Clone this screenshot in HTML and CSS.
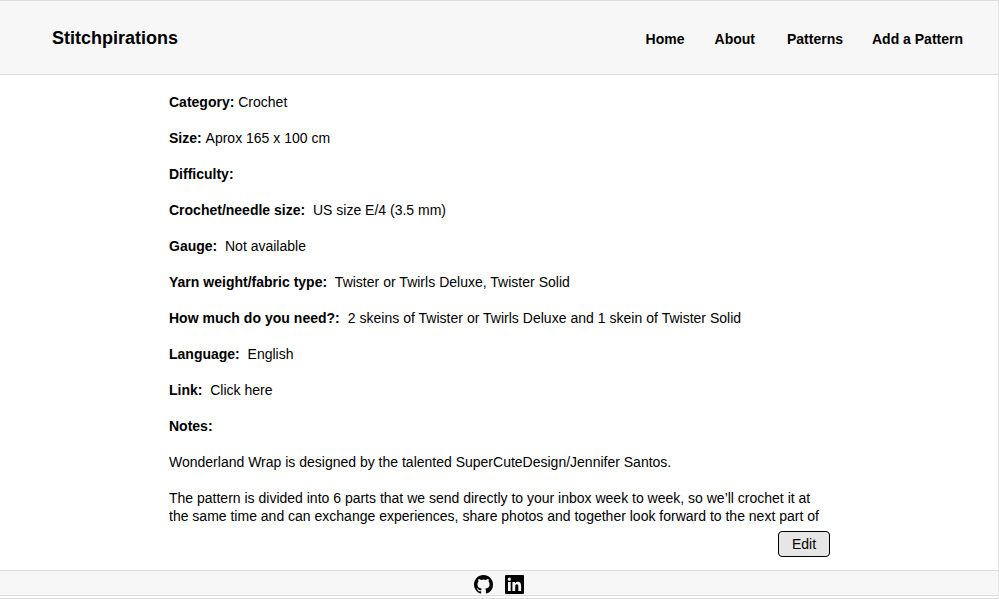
FILE: index.html
```html
<!DOCTYPE html>
<html lang="en">
<head>
<meta charset="utf-8">
<title>Stitchpirations</title>
<link rel="stylesheet" href="styles.css">
</head>
<body>
<header class="header">
  <div class="brand">Stitchpirations</div>
  <nav class="nav"><a class="home">Home</a><a>About</a><a class="patterns">Patterns</a><a>Add a Pattern</a></nav>
</header>
<main class="main">
  <div class="details">
    <p><b>Category:</b> Crochet</p>
    <p class="unkerned"><b>Size:</b> Aprox 165 x 100 cm</p>
    <p><b>Difficulty:</b></p>
    <p><b>Crochet/needle size:</b>&nbsp; US size E/4 (3.5 mm)</p>
    <p><b>Gauge:</b>&nbsp; Not available</p>
    <p class="spaced"><b>Yarn weight/fabric type:</b>&nbsp; Twister or Twirls Deluxe, Twister Solid</p>
    <p class="spaced"><b>How much do you need?:</b>&nbsp; 2 skeins of Twister or Twirls Deluxe and 1 skein of Twister Solid</p>
    <p><b>Language:</b>&nbsp; English</p>
    <p><b>Link:</b>&nbsp; Click here</p>
    <p><b>Notes:</b></p>
    <p>Wonderland Wrap is designed by the talented SuperCuteDesign/Jennifer Santos.</p>
    <p>The pattern is divided into 6 parts that we send directly to your inbox week to week, so we’ll crochet it at<br>the same time and can exchange experiences, share photos and together look forward to the next part of</p>
  </div>
  <button class="edit">Edit</button>
</main>
<footer class="footer">
  <svg class="icon" viewBox="0 0 16 16"><path d="M8 0C3.58 0 0 3.58 0 8c0 3.54 2.29 6.53 5.47 7.59.4.07.55-.17.55-.38 0-.19-.01-.82-.01-1.49-2.01.37-2.53-.49-2.69-.94-.09-.23-.48-.94-.82-1.13-.28-.15-.68-.52-.01-.53.63-.01 1.08.58 1.23.82.72 1.21 1.87.87 2.33.66.07-.52.28-.87.51-1.07-1.78-.2-3.64-.89-3.64-3.95 0-.87.31-1.59.82-2.15-.08-.2-.36-1.02.08-2.12 0 0 .67-.21 2.2.82a7.6 7.6 0 0 1 4 0c1.53-1.04 2.2-.82 2.2-.82.44 1.1.16 1.92.08 2.12.51.56.82 1.27.82 2.15 0 3.07-1.87 3.75-3.65 3.95.29.25.54.73.54 1.48 0 1.07-.01 1.93-.01 2.2 0 .21.15.46.55.38A8.01 8.01 0 0 0 16 8c0-4.42-3.58-8-8-8z"/></svg>
  <svg class="icon" viewBox="0 0 19 19"><path fill-rule="evenodd" d="M1 0H18Q19 0 19 1V18Q19 19 18 19H1Q0 19 0 18V1Q0 0 1 0ZM3 7V16H5.7V7ZM4.35 2.6a1.6 1.6 0 1 0 0 3.2a1.6 1.6 0 0 0 0-3.2ZM7.4 7V16H10.2V11.6C10.2 10 10.8 9.2 11.9 9.2S13.3 10 13.3 11.5V16H16.1V11C16.1 8.3 15 6.8 12.9 6.8C11.5 6.8 10.6 7.4 10.1 8.3V7Z"/></svg>
</footer>
</body>
</html>
```
FILE: styles.css
```css
* { box-sizing: border-box; }
body {
  margin: 0;
  height: 599px;
  overflow: hidden;
  display: flex;
  flex-direction: column;
  background: #fff;
  color: #000;
  font: 14px/18px "Liberation Sans", Arial, sans-serif;
  border-right: 1px solid #e6e6e6;
  border-bottom: 1px solid #ddd;
}
.header {
  height: 75px;
  flex: none;
  display: flex;
  justify-content: space-between;
  align-items: center;
  padding: 2px 35px 0 52px;
  background: #f7f7f7;
  border: solid #dcdcdc;
  border-width: 1px 0;
  font-weight: bold;
}
.brand { font-size: 18px; line-height: 22px; padding-bottom: 2px; }
.nav { display: flex; gap: 29px; }
.home { margin-right: 1px; }
.patterns { margin-left: 3px; }
.main {
  flex: 1;
  padding: 18px 168px 0 169px;
}
.details { height: 438px; overflow: hidden; white-space: nowrap; }
.details p { margin: 0 0 18px; }
.unkerned { font-kerning: none; }
.spaced { word-spacing: 0.1px; }
.edit {
  display: block;
  width: 52px;
  height: 26px;
  margin-left: auto;
  padding: 0;
  border: 1px solid #000;
  border-radius: 4px;
  background: #e6e6e6;
  font: inherit;
}
.footer {
  flex: none;
  height: 26px;
  margin-bottom: 2px;
  display: flex;
  justify-content: center;
  gap: 12px;
  padding: 4px 1px 0 0;
  background: #f7f7f7;
  border: solid #dcdcdc;
  border-width: 1px 0;
}
.icon { width: 19px; height: 19px; flex: none; }
```
